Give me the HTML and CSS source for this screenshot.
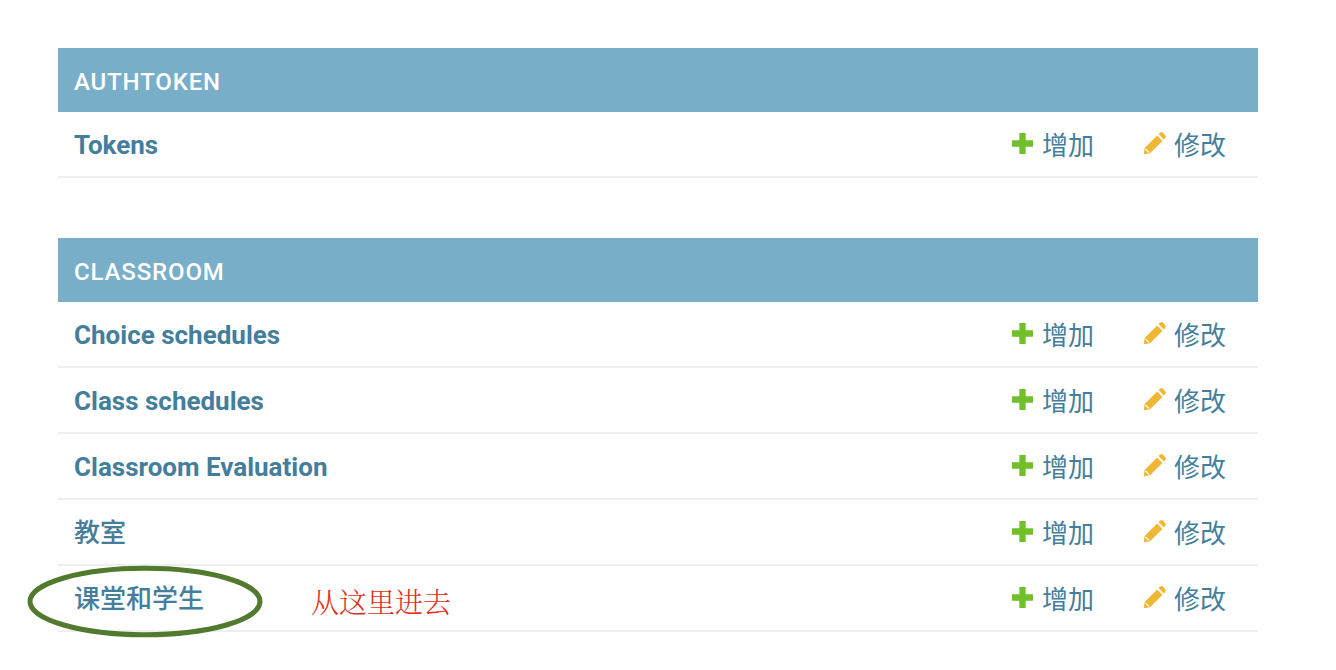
FILE: index.html
```html
<!DOCTYPE html>
<html lang="zh-CN">
<head>
<meta charset="utf-8">
<title>Site administration</title>
<link rel="stylesheet" href="styles.css">
</head>
<body>
<svg class="defs" aria-hidden="true">
  <symbol id="plus" viewBox="1 1 20 20"><path d="M8 1h6v7h7v6h-7v7H8v-7H1V8h7z" fill="#70bf2b"/></symbol>
  <symbol id="pencil" viewBox="0 0 24 24"><path d="M15.600 3.100l1.300-1.300a2.200 2.200 0 0 1 3.100 0l2.200 2.200a2.200 2.200 0 0 1 0 3.100l-1.300 1.300zM14.100 4.600l5.300 5.300L7 22.300l-6.300 1 1-6.300zM3 17.600l3.400 3.400-1 .8-3.200-3.200z" fill="#f0b732" fill-rule="evenodd"/></symbol>
</svg>
<main class="page">
  <section class="module">
    <h2 class="module-title">AUTHTOKEN</h2>
    <div class="row">
      <a class="name" href="#">Tokens</a>
      <a class="action add" href="#"><svg class="icon"><use href="#plus"/></svg>增加</a>
      <a class="action change" href="#"><svg class="icon"><use href="#pencil"/></svg>修改</a>
    </div>
  </section>
  <section class="module">
    <h2 class="module-title">CLASSROOM</h2>
    <div class="row">
      <a class="name" href="#">Choice schedules</a>
      <a class="action add" href="#"><svg class="icon"><use href="#plus"/></svg>增加</a>
      <a class="action change" href="#"><svg class="icon"><use href="#pencil"/></svg>修改</a>
    </div>
    <div class="row">
      <a class="name" href="#">Class schedules</a>
      <a class="action add" href="#"><svg class="icon"><use href="#plus"/></svg>增加</a>
      <a class="action change" href="#"><svg class="icon"><use href="#pencil"/></svg>修改</a>
    </div>
    <div class="row">
      <a class="name" href="#">Classroom Evaluation</a>
      <a class="action add" href="#"><svg class="icon"><use href="#plus"/></svg>增加</a>
      <a class="action change" href="#"><svg class="icon"><use href="#pencil"/></svg>修改</a>
    </div>
    <div class="row">
      <a class="name cjk" href="#">教室</a>
      <a class="action add" href="#"><svg class="icon"><use href="#plus"/></svg>增加</a>
      <a class="action change" href="#"><svg class="icon"><use href="#pencil"/></svg>修改</a>
    </div>
    <div class="row">
      <a class="name cjk" href="#">课堂和学生</a>
      <a class="action add" href="#"><svg class="icon"><use href="#plus"/></svg>增加</a>
      <a class="action change" href="#"><svg class="icon"><use href="#pencil"/></svg>修改</a>
    </div>
  </section>
</main>
<svg class="ellipse" viewBox="0 0 240 76"><ellipse cx="118" cy="37.500" rx="115" ry="33.200" fill="none" stroke="#527a2e" stroke-width="5"/></svg>
<span class="note">从这里进去</span>
</body>
</html>
```
FILE: styles.css
```css
html, body { margin: 0; padding: 0; background: #fff; }
body {
  position: relative;
  height: 670px;
  overflow: hidden;
  font-family: Roboto, "Noto Sans CJK SC", sans-serif;
}
.defs { display: none; }
.page { padding: 48px 78px 0 58px; }
.module { margin-bottom: 60px; }
.module-title {
  margin: 0;
  height: 64px;
  line-height: 68px;
  padding-left: 16px;
  background: #79aec8;
  color: #fff;
  font-size: 24px;
  font-weight: 500;
  letter-spacing: 0.85px;
}
.row {
  display: flex;
  align-items: center;
  height: 64px;
  padding: 0 32px 0 16px;
  border-bottom: 2px solid #eee;
}
.row a { color: #447e9b; text-decoration: none; }
.name { flex: 1; font-size: 26px; font-weight: 700; padding-top: 2px; }
.name.cjk { font-weight: 500; padding-top: 0; padding-bottom: 4px; }
.action { display: flex; align-items: center; font-size: 26px; padding-bottom: 2px; }
.add { margin-right: 49px; }
.icon { display: block; flex: none; margin-right: 9px; }
.add .icon { width: 21px; height: 21px; }
.change .icon { width: 24px; height: 24px; margin-right: 7px; }
.ellipse { position: absolute; left: 27px; top: 564px; width: 240px; height: 76px; }
.note {
  position: absolute;
  left: 311px;
  top: 587px;
  color: #e0301e;
  font-family: "Liberation Serif", "Noto Serif CJK SC", "Noto Sans CJK SC", serif;
  font-size: 28px;
  line-height: 34px;
  font-weight: 300;
}
```
